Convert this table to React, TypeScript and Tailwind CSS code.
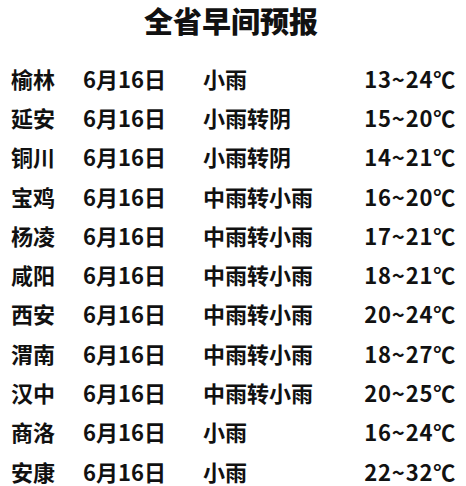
import React from "react";

const rows: [string, string, string, string][] = [
  ["榆林", "6月16日", "小雨", "13~24℃"],
  ["延安", "6月16日", "小雨转阴", "15~20℃"],
  ["铜川", "6月16日", "小雨转阴", "14~21℃"],
  ["宝鸡", "6月16日", "中雨转小雨", "16~20℃"],
  ["杨凌", "6月16日", "中雨转小雨", "17~21℃"],
  ["咸阳", "6月16日", "中雨转小雨", "18~21℃"],
  ["西安", "6月16日", "中雨转小雨", "20~24℃"],
  ["渭南", "6月16日", "中雨转小雨", "18~27℃"],
  ["汉中", "6月16日", "中雨转小雨", "20~25℃"],
  ["商洛", "6月16日", "小雨", "16~24℃"],
  ["安康", "6月16日", "小雨", "22~32℃"],
];

export default function App() {
  return (
    <div
      className="w-[466px] h-[486px] bg-white text-[#111] overflow-hidden"
      style={{ fontFamily: '"Noto Sans CJK SC", "Noto Sans", sans-serif' }}
    >
      <div className="text-center text-[29px] leading-[41px] font-black pr-[4px]">全省早间预报</div>
      <div className="mt-[17px] flex flex-col">
        {rows.map((r, i) => (
          <div
            key={i}
            className="grid grid-cols-[72px_120px_1fr_auto] h-[39.3px] items-center pl-[11px] pr-[10px] text-[22px] font-bold leading-none"
          >
            <span>{r[0]}</span>
            <span>{r[1]}</span>
            <span>{r[2]}</span>
            <span className="tracking-[0.8px]">{r[3]}</span>
          </div>
        ))}
      </div>
    </div>
  );
}
